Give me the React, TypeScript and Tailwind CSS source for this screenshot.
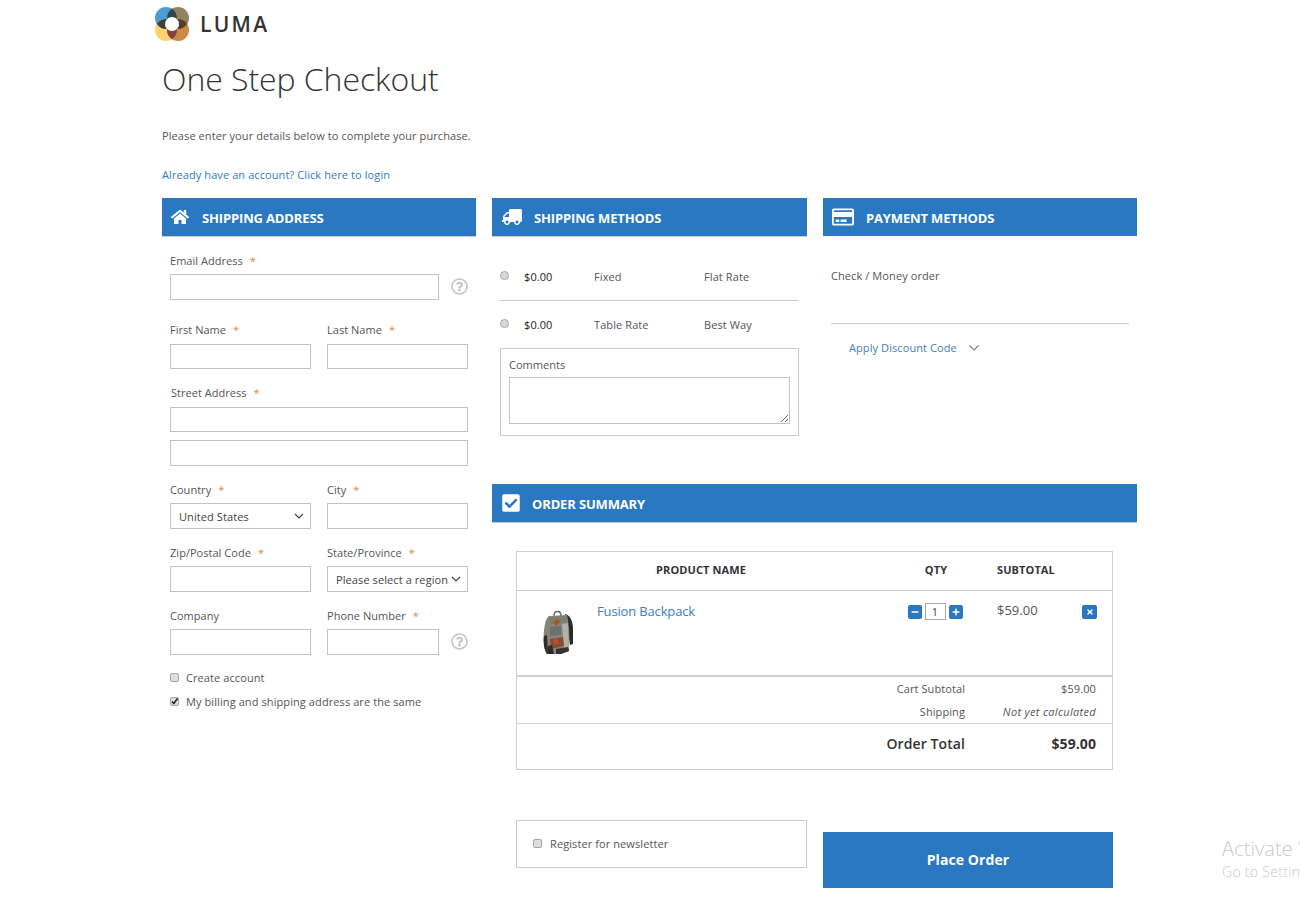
import type { ReactNode } from 'react';
import { FaCheckSquare, FaHome, FaMinus, FaPlus, FaRegCreditCard, FaRegQuestionCircle, FaTimes, FaTruck } from 'react-icons/fa';

function Logo() {
  return (
    <svg width="34" height="34" viewBox="0 0 34 34">
      <circle cx="11" cy="11" r="11" fill="#4f9bd5" />
      <circle cx="23" cy="11" r="11" fill="#8f8360" />
      <circle cx="11" cy="23" r="11" fill="#fdd36f" />
      <circle cx="23" cy="23" r="11" fill="#cd8a45" />
      <path d="M17 1.8A11 11 0 0 1 17 20.2A11 11 0 0 1 17 1.8Z" fill="#2f474f" />
      <path d="M1.8 17A11 11 0 0 1 20.2 17A11 11 0 0 1 1.8 17Z" fill="#3d403c" />
      <path d="M13.8 17A11 11 0 0 1 32.2 17A11 11 0 0 1 13.8 17Z" fill="#5b3b2c" />
      <path d="M17 13.8A11 11 0 0 1 17 32.2A11 11 0 0 1 17 13.8Z" fill="#80443a" />
      <circle cx="17" cy="17" r="7" fill="#fff" />
    </svg>
  );
}

function Backpack() {
  return (
    <svg width="32" height="46" viewBox="0 0 32 46">
      <path d="M12 6C12 0 19 0 19 6" fill="none" stroke="#6a6a6a" strokeWidth="1.5" />
      <path d="M23 4C28 5 31 11 31 19L31 34L28 35L25 14Z" fill="#2a2a2a" />
      <path d="M7 6L25 5C27 14 28 28 27 41L19 44L5 44C2 40 1 30 2 20C3 13 4 8 7 6Z" fill="#85857a" />
      <path d="M2 26L5 25L6 44L5 44C2 40 1 32 2 26Z" fill="#2f2c2a" />
      <path d="M7 7L24 6L25 12L8 14Z" fill="#7d7e6c" />
      <path d="M11 12L16 9L18 12L14 16Z" fill="#a9502e" />
      <path d="M20 14L26 13L27 38L22 40Z" fill="#b1b1a6" />
      <path d="M8 29L21 27L22 36L9 39Z" fill="#8a4a36" />
      <path d="M11 30L15 28L17 33L12 35Z" fill="#b5532f" />
      <path d="M6 36L10 35L12 44L6 44Z" fill="#2e2b2a" />
      <path d="M14 39L26 37L27 41L19 44L14 44Z" fill="#37322f" />
      <path d="M8 17L19 16L19 25L8 26Z" fill="#6f7069" />
    </svg>
  );
}

function Star() {
  return <span className="text-[#e08a3c] ml-[7px]">*</span>;
}

function Label({ text, required, className = '' }: { text: string; required?: boolean; className?: string }) {
  return (
    <label className={`block h-[14px] leading-[14px] text-[11px] tracking-[0.03px] text-[#555] whitespace-nowrap ${className}`}>
      {text}
      {required && <Star />}
    </label>
  );
}

function TextBox({ className = 'h-[26px]' }: { className?: string }) {
  return <input type="text" className={`block w-full border border-[#c2c2c2] bg-white ${className}`} />;
}

function Dropdown({ value }: { value: string }) {
  return (
    <div className="relative">
      <select className="block w-full h-[26px] appearance-none border border-[#c2c2c2] bg-white pl-[8px] pt-[2px] text-[11px] text-[#444]">
        <option>{value}</option>
      </select>
      <svg className="absolute right-[7px] top-[10px] pointer-events-none" width="10" height="6" viewBox="0 0 10 6">
        <path d="M1 1L5 5L9 1" fill="none" stroke="#444" strokeWidth="1.2" />
      </svg>
    </div>
  );
}

function Help() {
  return <FaRegQuestionCircle className="text-[#c4c4c4] w-[17px] h-[17px] shrink-0 -mt-[2px]" />;
}

function Check({ checked }: { checked?: boolean }) {
  return (
    <span className="relative inline-block w-[9px] h-[9px] shrink-0 -mt-[1px]">
      <input type="checkbox" readOnly checked={!!checked} className="block appearance-none w-[9px] h-[9px] rounded-[2px] border border-[#a5a5a5] bg-[#dedede]" />
      {checked && (
        <svg className="absolute left-0 top-0" width="9" height="9" viewBox="0 0 9 9">
          <path d="M2 4.5L3.8 6.5L7.5 1.5" fill="none" stroke="#222" strokeWidth="1.6" />
        </svg>
      )}
    </span>
  );
}

function Bar({ icon, title, border = true }: { icon: ReactNode; title: string; border?: boolean }) {
  return (
    <div className={`flex items-center bg-[#2a78c2] text-white ${border ? 'h-[39px] border-b border-[#c9c9c9]' : 'h-[38px]'}`}>
      {icon}
      <h2 className="mt-[3px] text-[13px] font-bold uppercase tracking-[-0.15px]">{title}</h2>
    </div>
  );
}

function MethodRow({ name, carrier }: { name: string; carrier: string }) {
  return (
    <div className="flex items-center h-[16px] text-[11px] text-[#555]">
      <input type="radio" readOnly className="block appearance-none w-[9px] h-[9px] rounded-full border border-[#a5a5a5] bg-[#d8d8d8] mr-[15px] -mt-[4px]" />
      <span className="w-[70px] font-medium text-[#222]">$0.00</span>
      <span className="w-[110px]">{name}</span>
      <span>{carrier}</span>
    </div>
  );
}

function QtyButton({ children }: { children: ReactNode }) {
  return <button className="w-[14px] h-[14px] flex items-center justify-center rounded-[2px] bg-[#2a78c2] text-white">{children}</button>;
}

export default function App() {
  return (
    <div className="relative w-[1300px] h-[900px] overflow-hidden bg-white font-['Open_Sans',sans-serif] tracking-[0.09px] text-[#333]">
      <div className="ml-[162px] w-[975px]">
        {/* logo */}
        <div className="flex items-center -ml-[7px] pt-[7px] h-[41px]">
          <Logo />
          <span className="ml-[11px] text-[21px] leading-[34px] font-[550] tracking-[2.3px] text-[#333]">LUMA</span>
        </div>

        <h1 className="mt-[18px] text-[32px] leading-[40px] font-light tracking-[-0.06px] text-[#333]">One Step Checkout</h1>
        <p className="mt-[29px] text-[11px] leading-[16px] text-[#555]">Please enter your details below to complete your purchase.</p>
        <a href="#" className="block mt-[23px] text-[11px] leading-[16px] text-[#2f7cc4]">Already have an account? Click here to login</a>

        <div className="mt-[15px] flex gap-[16px]">
          {/* shipping address */}
          <div className="w-[314px]">
            <Bar icon={<FaHome className="w-[18px] h-[18px] ml-[9px] mr-[13px]" />} title="Shipping Address" />
            <form className="px-[8px] pt-[17px]">
              <Label text="Email Address" required className="mb-[6px]" />
              <div className="flex items-center justify-between">
                <div className="w-[269px]"><TextBox /></div>
                <Help />
              </div>

              <div className="grid grid-cols-2 gap-x-[16px] mt-[23px]">
                <div>
                  <Label text="First Name" required className="mb-[7px]" />
                  <TextBox className="h-[25px]" />
                </div>
                <div>
                  <Label text="Last Name" required className="mb-[7px]" />
                  <TextBox className="h-[25px]" />
                </div>
              </div>

              <Label text="Street Address" required className="mt-[17px] mb-[7px] ml-[1px]" />
              <TextBox className="h-[25px]" />
              <TextBox className="h-[26px] mt-[8px]" />

              <div className="grid grid-cols-2 gap-x-[16px] gap-y-[17px] mt-[17px]">
                <div>
                  <Label text="Country" required className="mb-[6px]" />
                  <Dropdown value="United States" />
                </div>
                <div>
                  <Label text="City" required className="mb-[6px]" />
                  <TextBox />
                </div>
                <div>
                  <Label text="Zip/Postal Code" required className="mb-[6px]" />
                  <TextBox />
                </div>
                <div>
                  <Label text="State/Province" required className="mb-[6px]" />
                  <Dropdown value="Please select a region" />
                </div>
                <div>
                  <Label text="Company" className="mb-[6px]" />
                  <TextBox />
                </div>
                <div>
                  <Label text="Phone Number" required className="mb-[6px]" />
                  <div className="flex items-center justify-between">
                    <div className="w-[112px]"><TextBox /></div>
                    <Help />
                  </div>
                </div>
              </div>

              <div className="flex items-center h-[14px] mt-[16px] text-[11px] text-[#555]">
                <Check />
                <span className="ml-[7px]">Create account</span>
              </div>
              <div className="flex items-center h-[14px] mt-[10px] text-[11px] text-[#555]">
                <Check checked />
                <span className="ml-[7px]">My billing and shipping address are the same</span>
              </div>
            </form>
          </div>

          <div className="w-[645px]">
            <div className="flex gap-[16px] h-[286px]">
              {/* shipping methods */}
              <div className="w-[315px]">
                <Bar icon={<FaTruck className="w-[20px] h-[18px] ml-[10px] mr-[12px] -scale-x-100" />} title="Shipping Methods" />
                <div className="px-[8px]">
                  <div className="pt-[32px] pb-[15px] border-b border-[#c9c9c9] w-[298px]">
                    <MethodRow name="Fixed" carrier="Flat Rate" />
                  </div>
                  <div className="pt-[16px]">
                    <MethodRow name="Table Rate" carrier="Best Way" />
                  </div>
                  <div className="mt-[15px] w-[299px] h-[88px] border border-[#c9c9c9] px-[8px] pt-[9px]">
                    <Label text="Comments" className="mb-[5px]" />
                    <textarea className="block w-[281px] h-[47px] border border-[#c2c2c2]" />
                  </div>
                </div>
              </div>

              {/* payment methods */}
              <div className="w-[314px]">
                <Bar icon={<FaRegCreditCard className="w-[22px] h-[20px] ml-[9px] mr-[12px]" />} title="Payment Methods" border={false} />
                <div className="px-[8px]">
                  <p className="mt-[32px] h-[16px] leading-[16px] text-[11px] text-[#555]">Check / Money order</p>
                  <div className="mt-[39px] border-t border-[#c9c9c9]" />
                  <a href="#" className="flex items-center mt-[16px] ml-[18px] h-[16px] text-[11px] text-[#3f7fc0]">
                    Apply Discount Code
                    <svg className="ml-[12px]" width="10" height="6" viewBox="0 0 10 6">
                      <path d="M0.5 0.5L5 5L9.5 0.5" fill="none" stroke="#888" strokeWidth="1.2" />
                    </svg>
                  </a>
                </div>
              </div>
            </div>

            {/* order summary */}
            <Bar icon={<FaCheckSquare className="w-[18px] h-[20px] ml-[10px] mr-[12px]" />} title="Order Summary" />

            <div className="ml-[24px] mt-[28px] w-[597px] border border-[#cfcfcf]">
              <div className="grid grid-cols-[368px_102px_85px_1fr] h-[39px] items-center pb-[2px] border-b border-[#cfcfcf] text-[11px] font-bold uppercase tracking-[0.1px] text-[#333]">
                <div className="text-center">Product Name</div>
                <div className="text-center">Qty</div>
                <div className="pl-[10px]">Subtotal</div>
                <div />
              </div>

              <div className="grid grid-cols-[368px_102px_85px_1fr] h-[86px] border-b-2 border-[#cfcfcf]">
                <div className="flex">
                  <div className="ml-[25px] mt-[19px]"><Backpack /></div>
                  <a href="#" className="ml-[23px] mt-[11px] h-[18px] leading-[18px] text-[13px] tracking-[-0.15px] text-[#3a80c4]">Fusion Backpack</a>
                </div>
                <div className="flex items-start justify-center gap-[3px] pt-[14px] pr-[2px]">
                  <QtyButton><FaMinus className="w-[8px] h-[8px]" /></QtyButton>
                  <input type="text" readOnly value="1" className="w-[21px] h-[17px] -mt-[2px] border border-[#a8a8a8] text-center text-[10px] text-[#333]" />
                  <QtyButton><FaPlus className="w-[8px] h-[8px]" /></QtyButton>
                </div>
                <div className="pl-[10px] pt-[10px] leading-[18px] text-[13px] tracking-normal text-[#555]">$59.00</div>
                <div className="pl-[10px] pt-[14px]">
                  <button className="w-[15px] h-[14px] flex items-center justify-center rounded-[2px] bg-[#2a78c2] text-white">
                    <FaTimes className="w-[8px] h-[8px]" />
                  </button>
                </div>
              </div>

              <div className="grid grid-cols-[448px_1fr] pr-[16px] pt-[4px] text-[11px] text-[#555]">
                <div className="text-right h-[23px] leading-[16px]">Cart Subtotal</div>
                <div className="text-right h-[23px] leading-[16px]">$59.00</div>
                <div className="text-right h-[19px] leading-[16px]">Shipping</div>
                <div className="text-right h-[19px] leading-[16px] italic tracking-[0.33px]">Not yet calculated</div>
              </div>
              <div className="grid grid-cols-[448px_1fr] h-[46px] items-center pb-[6px] pr-[16px] border-t border-[#cfcfcf] text-[14px] font-semibold text-[#333]">
                <div className="text-right">Order Total</div>
                <div className="text-right font-bold">$59.00</div>
              </div>
            </div>

            <div className="flex items-start ml-[24px] mt-[50px]">
              <div className="w-[291px] h-[48px] flex items-center border border-[#c9c9c9] pl-[16px] text-[11px] text-[#555]">
                <Check />
                <span className="ml-[8px]">Register for newsletter</span>
              </div>
              <button className="ml-[16px] mt-[12px] w-[290px] h-[56px] pb-[2px] bg-[#2a78c2] text-white text-[14px] font-bold">Place Order</button>
            </div>
          </div>
        </div>
      </div>

      {/* windows watermark */}
      <div className="absolute left-[1222px] top-[836px] whitespace-nowrap text-[#c9c9c9]">
        <div className="text-[20px] leading-[26px] font-light">Activate Windows</div>
        <div className="text-[14px] leading-[19px] font-light tracking-[0.3px]">Go to Settings to activate Windows.</div>
      </div>
    </div>
  );
}
